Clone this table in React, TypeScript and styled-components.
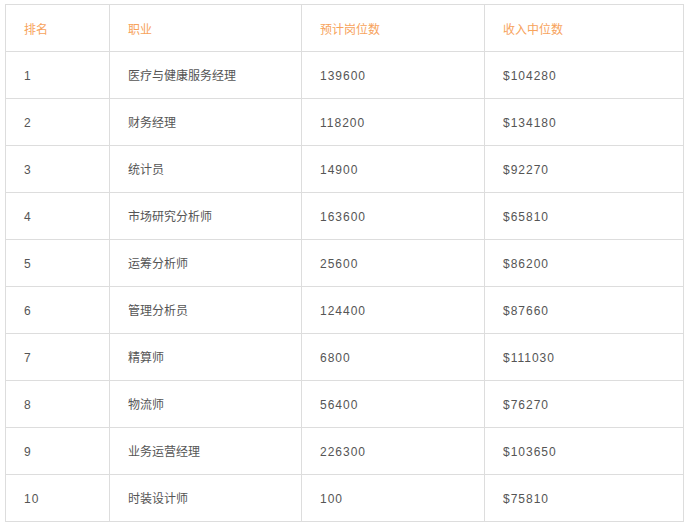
import styled, { createGlobalStyle } from "styled-components";

const GlobalStyle = createGlobalStyle`
  body {
    margin: 0;
    background: #fff;
    font-family: "Liberation Sans", "Noto Sans CJK SC", sans-serif;
  }
`;

const Wrapper = styled.div`
  padding: 4px 0 0 5px;
`;

const Table = styled.table`
  border-collapse: collapse;
  table-layout: fixed;
  width: 678px;
`;

const HeadCell = styled.th`
  height: 43px;
  padding: 3px 0 0 18px;
  border: 1px solid #dddddd;
  text-align: left;
  font-weight: normal;
  font-size: 12px;
  line-height: 14px;
  color: #f7a35c;
`;

const Cell = styled.td<{ $num?: boolean }>`
  height: 44px;
  padding: 2px 0 0 18px;
  border: 1px solid #dddddd;
  font-size: 12px;
  line-height: 14px;
  color: #555555;
  letter-spacing: ${(p) => (p.$num ? "1px" : "0")};
`;

const rows = [
  ["1", "医疗与健康服务经理", "139600", "$104280"],
  ["2", "财务经理", "118200", "$134180"],
  ["3", "统计员", "14900", "$92270"],
  ["4", "市场研究分析师", "163600", "$65810"],
  ["5", "运筹分析师", "25600", "$86200"],
  ["6", "管理分析员", "124400", "$87660"],
  ["7", "精算师", "6800", "$111030"],
  ["8", "物流师", "56400", "$76270"],
  ["9", "业务运营经理", "226300", "$103650"],
  ["10", "时装设计师", "100", "$75810"],
];

export default function App() {
  return (
    <Wrapper>
      <GlobalStyle />
      <Table>
        <colgroup>
          <col style={{ width: 104 }} />
          <col style={{ width: 192 }} />
          <col style={{ width: 183 }} />
          <col style={{ width: 199 }} />
        </colgroup>
        <thead>
          <tr>
            <HeadCell>排名</HeadCell>
            <HeadCell>职业</HeadCell>
            <HeadCell>预计岗位数</HeadCell>
            <HeadCell>收入中位数</HeadCell>
          </tr>
        </thead>
        <tbody>
          {rows.map((r) => (
            <tr key={r[0]}>
              <Cell $num>{r[0]}</Cell>
              <Cell>{r[1]}</Cell>
              <Cell $num>{r[2]}</Cell>
              <Cell $num>{r[3]}</Cell>
            </tr>
          ))}
        </tbody>
      </Table>
    </Wrapper>
  );
}
